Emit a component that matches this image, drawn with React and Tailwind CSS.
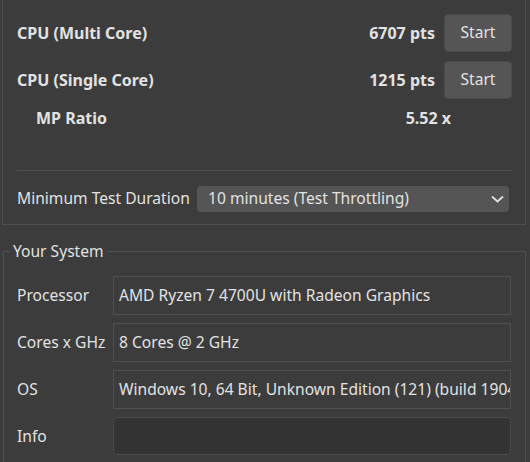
export default function App() {
    return (
        <div className="w-[530px] h-[462px] overflow-hidden bg-[#3c3c3c] text-[#e2e2e2] text-[15.6px] font-['Noto_Sans',sans-serif]">

            {/* benchmark panel */}
            <div className="ml-[2px] w-[524px] h-[225px] border-x border-b border-[#4f4f4f] pt-[14px] pl-[14px] pr-[13px]">
                <div className="flex items-center h-[38px] text-[16px] font-bold">
                    <span className="flex-1">CPU (Multi Core)</span>
                    <span className="mr-[9px]">6707 pts</span>
                    <button className="w-[68px] h-[38px] rounded-[4px] bg-[#555555] border border-[#4a4a4a] font-normal text-[15.6px]">Start</button>
                </div>
                <div className="flex items-center h-[38px] mt-[9px] text-[16px] font-bold">
                    <span className="flex-1">CPU (Single Core)</span>
                    <span className="mr-[9px]">1215 pts</span>
                    <button className="w-[68px] h-[38px] rounded-[4px] bg-[#555555] border border-[#4a4a4a] font-normal text-[15.6px]">Start</button>
                </div>
                <div className="flex items-center h-[28px] mt-[5px] pl-[19px] pr-[61px] text-[16px] font-bold">
                    <span className="flex-1">MP Ratio</span>
                    <span>5.52 x</span>
                </div>
                <div className="h-px bg-[#4f4f4f] mt-[38px] mr-[-1px]" />
                <div className="flex items-center mt-[15px] pr-[3px]">
                    <span className="w-[180px]">Minimum Test Duration</span>
                    <div className="flex-1 h-[26px] rounded-[4px] bg-[#555555] flex items-center pl-[11px] pr-[5px]">
                        <span className="flex-1">10 minutes (Test Throttling)</span>
                        <svg width="13" height="8" viewBox="0 0 13 8" fill="none" stroke="#e2e2e2" strokeWidth="1.8">
                            <path d="M1 1.5 L6.5 6.5 L12 1.5" />
                        </svg>
                    </div>
                </div>
            </div>

            {/* system info */}
            <fieldset className="ml-[3px] w-[523px] min-w-0 mt-[15px] border border-[#4f4f4f] pb-[20px]">
                <legend className="ml-[6px] px-[3px]">Your System</legend>
                <div className="flex flex-col gap-[8px] mt-[13px] pl-[13px] pr-[14px]">
                    <div className="flex items-center">
                        <span className="w-[96px] shrink-0">Processor</span>
                        <div className="flex-1 min-w-0 h-[39px] border border-[#505050] flex items-center pl-[5px] whitespace-nowrap overflow-hidden">AMD Ryzen 7 4700U with Radeon Graphics</div>
                    </div>
                    <div className="flex items-center">
                        <span className="w-[96px] shrink-0">Cores x GHz</span>
                        <div className="flex-1 min-w-0 h-[39px] border border-[#505050] flex items-center pl-[5px] whitespace-nowrap overflow-hidden">8 Cores @ 2 GHz</div>
                    </div>
                    <div className="flex items-center">
                        <span className="w-[96px] shrink-0">OS</span>
                        <div className="flex-1 min-w-0 h-[39px] border border-[#505050] flex items-center pl-[5px] whitespace-nowrap overflow-hidden">Windows 10, 64 Bit, Unknown Edition (121) (build 19041)</div>
                    </div>
                    <div className="flex items-center">
                        <span className="w-[96px] shrink-0">Info</span>
                        <div className="flex-1 min-w-0 h-[38px] rounded-[5px] border border-[#4a4a4a] bg-[#333333]" />
                    </div>
                </div>
            </fieldset>
        </div>
    );
}
